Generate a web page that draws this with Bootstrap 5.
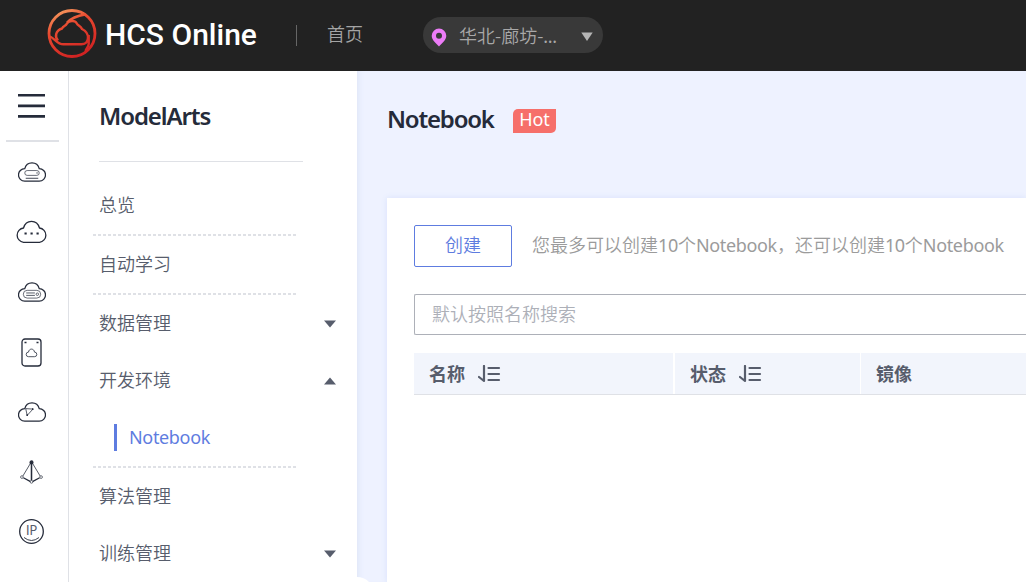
<!DOCTYPE html>
<html lang="zh-CN">
<head>
<meta charset="utf-8">
<meta name="viewport" content="width=device-width, initial-scale=1">
<title>ModelArts - Notebook</title>
<link href="https://cdn.jsdelivr.net/npm/bootstrap@5.3.0/dist/css/bootstrap.min.css" rel="stylesheet">
<style>
body{font-family:"Noto Sans","Noto Sans CJK SC",sans-serif;font-size:18px;line-height:24px;color:#575d6c;height:100vh;overflow:hidden;background:#fff}
.zh{font-family:"Noto Sans CJK SC","Noto Sans",sans-serif;font-weight:350}
.lat{font-family:"Noto Sans",sans-serif;font-weight:400;letter-spacing:-.34px}
.topbar{height:71px;background:#222;padding:0;color:#a4a4a4}
.brand-name{font-family:Roboto,sans-serif;font-weight:500;font-size:30px;line-height:40px;color:#fff;margin-left:8px;padding-top:3px;width:191px;white-space:nowrap}
.split{width:1px;height:21px;background:#666}
.region{width:180px;height:36px;border-radius:18px;background:#393939;color:#a8a8a8;border:0}
.rail{width:69px;border-right:1px solid #dfe1e6;background:#fff}
.rail-top{width:53px;height:71px;margin-left:6px;padding:22px 0 0 12px;border-bottom:2px solid #dfe1e6}
.rail a{height:60px;width:63px;display:flex;align-items:center;justify-content:center}
.rail svg{fill:none;stroke:#252b3a;stroke-width:1.3}
.side{width:288px;background:#fff}
.side-title{height:91px;width:204px;margin:0 0 15px 30px;border-bottom:1px solid #dfe1e6;font-size:24px;font-weight:600;letter-spacing:-1.1px;color:#252b3a;line-height:90px}
.side .nav-link{height:57px;padding:0 21px 3px 30px;color:#575d6c}
.side .nav-link svg{position:relative;top:2px}
.dots{height:2px;width:204px;margin-left:24px;background:repeating-linear-gradient(90deg,#dfe1e6 0 3px,transparent 3px 5px)}
.side .sub{padding:0 0 0 45px;color:#5e7ce0}
.sub span{border-left:3px solid #5e7ce0;padding-left:12px;height:27px;line-height:26px}
.main{background:#eef2ff;box-shadow:inset 6px 0 6px -5px #dbe3f5;padding-left:30px}
.collapse-tab{position:absolute;left:-17px;top:506px;width:34px;height:34px;border-radius:50%;background:#fff}
.page-title{font-size:24px;font-weight:600;letter-spacing:-1.2px;color:#252b3a;line-height:34px;padding-bottom:3px;width:108px;white-space:nowrap}
.hot{height:24px;width:43px;background:#f66f6a;color:#fff;border-radius:5px 0 5px 0;line-height:21px;text-align:center;margin:1px 0 0 18px}
.panel{background:#fff;padding:27px 0 0 27px;box-shadow:0 0 6px rgba(94,124,224,.14)}
.btn-create{width:98px;height:42px;border:1px solid #5e7ce0;border-radius:2px;color:#5e7ce0;font-size:18px;padding:0 0 3px;background:#fff}
.hint{color:#9b9b9b;white-space:nowrap;padding-bottom:3px}
.search{height:41px;border:1px solid #adb0b8;border-right:0;border-radius:2px 0 0 2px;padding:0 17px 4px;font-size:18px;margin-top:27px}
.search::placeholder{color:#adb0b8;opacity:1}
.heads{margin-top:18px;height:42px;border-bottom:1px solid #dfe1e6;color:#575d6c;font-weight:700;font-family:"Noto Sans CJK SC",sans-serif}
.heads>div{background:#f2f5fc;padding:0 0 2px 15px}
.heads svg{position:relative;top:1px;margin-left:13px;stroke-linecap:round;stroke-linejoin:round}
</style>
</head>
<body class="d-flex flex-column">
<nav class="navbar topbar flex-nowrap justify-content-start align-items-start flex-shrink-0">
  <div class="d-flex align-items-center" style="padding:8px 0 0 47px">
    <svg width="50" height="51" viewBox="0 0 50 51" fill="none" stroke="url(#lg)" stroke-width="2.800">
      <defs><linearGradient id="lg" gradientUnits="userSpaceOnUse" x1="8" y1="3" x2="30" y2="49"><stop offset="0" stop-color="#f6a062"/><stop offset=".35" stop-color="#e94a30"/><stop offset="1" stop-color="#d02222"/></linearGradient></defs>
      <circle cx="25" cy="25.500" r="23"/>
      <path stroke-width="2.400" d="M16.500 36.300H34.500C42 36.300 44 25.500 35 21C33.500 17.500 31 18 29.500 15C28 12.200 22 12.200 20 15.500C18.500 18.500 16.500 17.500 15 20.500C8.500 22.500 7.500 29 11 32.500M3 28.500C8 30.500 10 36.300 16.500 36.300M20 14.500C24 10.500 29 8 38 6.500M41.700 27V36C41.500 39 39.500 40 38.500 43"/>
    </svg>
    <div class="brand-name">HCS Online</div>
  </div>
  <div class="split" style="margin-top:25px"></div>
  <a class="zh text-reset text-decoration-none" style="margin:21px 0 0 30px">首页</a>
  <button class="region zh d-flex align-items-center p-0" style="margin:17px 0 0 60px">
    <svg style="margin:5px 12px 0 8px" width="16" height="19" viewBox="0 0 16 19"><path fill="#ec7cf7" fill-rule="evenodd" d="M8 .5a7.300 7.300 0 0 1 7.300 7.300C15.300 12 11 15.500 8 18.500C5 15.500.7 12 .7 7.800A7.300 7.300 0 0 1 8 .5ZM8 4.800a3 3 0 1 0 0 6A3 3 0 0 0 8 4.800Z"/></svg>
    <span>华北-廊坊-<span class="lat">...</span></span>
    <svg class="ms-auto" style="margin:3px 10px 0 0" width="12" height="10"><path fill="#b5b5b5" d="M.3 .5h11.400L6 9z"/></svg>
  </button>
</nav>
<div class="d-flex flex-grow-1" style="min-height:0">
  <aside class="rail flex-shrink-0">
    <div class="rail-top">
      <svg class="d-block" width="27" height="26"><path stroke-width="2.600" d="M0 2.200H27M0 12.900H27M0 23.400H27"/></svg>
    </div>
    <a><svg width="28" height="22" viewBox="0.500 0 29 22"><path d="M7.500 20.500A6.500 6.500 0 0 1 7.500 7.500C9.500 -.5 20.500 -.5 22.500 7.500A6.500 6.500 0 0 1 22.500 20.500Z"/><rect x="7.500" y="9.500" width="15" height="5" rx="2.500" stroke-width=".7"/><path stroke-width=".9" d="M8.500 17.500h13M19.500 12h1.500"/></svg></a>
    <a><svg width="31" height="24" viewBox="0.500 0 31 24"><path d="M8 22.300A7.200 7.200 0 0 1 8 8C10.500 -.8 21.500 -.8 24 8A7.200 7.200 0 0 1 24 22.300Z"/><path stroke-width="2.200" d="M9 13.500h2.200M15 13.500h2.200M21 13.500h2.200"/></svg></a>
    <a><svg width="28" height="22" viewBox="0.500 0 29 22"><path d="M7.500 20.500A6.500 6.500 0 0 1 7.500 7.500C9.500 -.5 20.500 -.5 22.500 7.500A6.500 6.500 0 0 1 22.500 20.500Z"/><rect x="6" y="9.300" width="18" height="8" rx="4" stroke-width=".7"/><path stroke-width=".8" d="M9 12h9M9 14.500h9"/><circle cx="20.500" cy="13.300" r="1.300" stroke-width=".7"/></svg></a>
    <a><svg width="21" height="29" viewBox="0.500 0.500 21 29"><rect x="1.500" y="1.500" width="19" height="27" rx="3"/><path stroke-width="1.600" d="M4 5h2M16 5h2"/><path stroke-width=".8" d="M8 19.200a2.300 2.300 0 0 1 0-4.600c.5-4 5.500-4 6 0a2.300 2.300 0 0 1 0 4.600Z"/></svg></a>
    <a><svg width="28" height="22" viewBox="0.500 0 29 22"><path d="M7.500 20.500A6.500 6.500 0 0 1 7.500 7.500C9.500 -.5 20.500 -.5 22.500 7.500A6.500 6.500 0 0 1 22.500 20.500Z"/><path stroke-width=".8" d="M8.500 7.500L16 8L10 14.500Z"/><path stroke-width="1.800" d="M15 8h1.500M9.300 14.200h1.500"/></svg></a>
    <a><svg width="23" height="26" viewBox="0 0 24 26"><path stroke-width=".8" d="M11.500 3L2.500 18M12.500 3L21.500 18"/><path stroke-width="1.300" d="M3.500 19L11 23M20.500 19L13 23"/><path stroke-width="1.600" d="M12 3V22"/><circle cx="12" cy="3" r="1.500" fill="#252b3a"/><g fill="#fff" stroke-width=".7"><circle cx="2" cy="18.300" r="1.400"/><circle cx="22" cy="18.300" r="1.400"/><circle cx="12" cy="23.300" r="1.400"/></g></svg></a>
    <a><svg width="25" height="25" viewBox="0.500 0.500 25 25" style="margin-bottom:1px"><circle cx="13" cy="13" r="11.800"/><path stroke-width=".9" d="M5.500 19Q13 25 20.500 19"/><text x="13" y="16.500" text-anchor="middle" font-size="12.500" font-family="Lato" font-weight="400" fill="#575d6c" stroke="none">IP</text></svg></a>
  </aside>
  <aside class="side flex-shrink-0">
    <div class="side-title">ModelArts</div>
    <nav class="nav flex-column zh">
      <a class="nav-link d-flex align-items-center">总览</a><div class="dots"></div>
      <a class="nav-link d-flex align-items-center">自动学习</a><div class="dots"></div>
      <a class="nav-link d-flex align-items-center justify-content-between">数据管理<svg width="12" height="8"><path fill="#575d6c" d="M0 .5h12L6 7.500z"/></svg></a>
      <a class="nav-link d-flex align-items-center justify-content-between">开发环境<svg width="12" height="8"><path fill="#575d6c" d="M0 7.500h12L6 .5z"/></svg></a>
      <a class="nav-link d-flex align-items-center sub"><span class="lat">Notebook</span></a><div class="dots"></div>
      <a class="nav-link d-flex align-items-center">算法管理</a>
      <a class="nav-link d-flex align-items-center justify-content-between">训练管理<svg width="12" height="8"><path fill="#575d6c" d="M0 .5h12L6 7.500z"/></svg></a>
    </nav>
  </aside>
  <main class="main flex-grow-1 position-relative d-flex flex-column overflow-hidden">
    <div class="collapse-tab"></div>
    <div class="d-flex align-items-center" style="height:127px;padding-bottom:28px">
      <div class="page-title">Notebook</div><span class="hot">Hot</span>
    </div>
    <section class="panel flex-grow-1">
      <div class="d-flex align-items-center"><button class="btn btn-create zh">创建</button>
        <span class="hint zh" style="margin-left:20px">您最多可以创建<span class="lat">10</span>个<span class="lat">Notebook</span>，还可以创建<span class="lat">10</span>个<span class="lat">Notebook</span></span></div>
      <input class="form-control search zh" placeholder="默认按照名称搜索">
      <div class="heads d-flex">
        <div class="d-flex align-items-center" style="width:259px;margin-right:2px">名称<svg width="23" height="18" fill="none" stroke="#575d6c" stroke-width="2.200"><path d="M6 1V16L1 12M10.500 3H21M10.500 9H21M10.500 15H21"/></svg></div>
        <div class="d-flex align-items-center" style="width:185px;margin-right:1px">状态<svg width="23" height="18" fill="none" stroke="#575d6c" stroke-width="2.200"><path d="M6 1V16L1 12M10.500 3H21M10.500 9H21M10.500 15H21"/></svg></div>
        <div class="d-flex align-items-center flex-grow-1">镜像</div>
      </div>
    </section>
  </main>
</div>
<script src="https://cdn.jsdelivr.net/npm/bootstrap@5.3.0/dist/js/bootstrap.bundle.min.js"></script>
</body>
</html>
